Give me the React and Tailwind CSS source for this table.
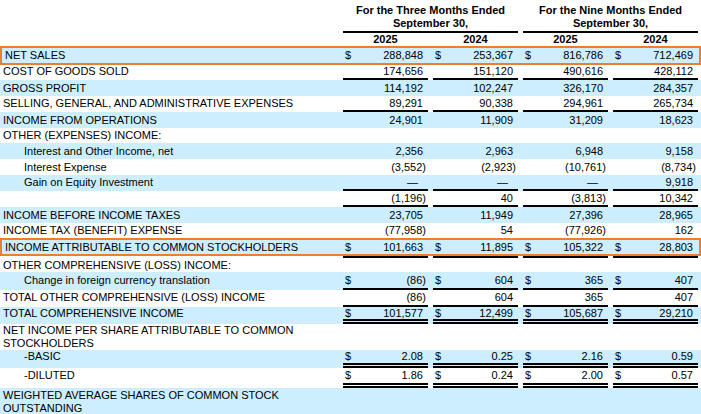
const BLUE = "bg-[#cceeff]";

const rows = [
  { label: "COST OF GOODS SOLD", vals: ["174,656", "151,120", "490,616", "428,112"], line: "single", h: "h-[15px]" },
  { label: "GROSS PROFIT", vals: ["114,192", "102,247", "326,170", "284,357"], bg: true, h: "h-[16px]" },
  { label: "SELLING, GENERAL, AND ADMINISTRATIVE EXPENSES", vals: ["89,291", "90,338", "294,961", "265,734"], line: "single", h: "h-[16px]" },
  { label: "INCOME FROM OPERATIONS", vals: ["24,901", "11,909", "31,209", "18,623"], bg: true, h: "h-[16px]" },
  { label: "OTHER (EXPENSES) INCOME:", h: "h-[15px]" },
  { label: "Interest and Other Income, net", indent: true, vals: ["2,356", "2,963", "6,948", "9,158"], bg: true, h: "h-[16px]" },
  { label: "Interest Expense", indent: true, vals: ["(3,552)", "(2,923)", "(10,761)", "(8,734)"], h: "h-[16px]" },
  { label: "Gain on Equity Investment", indent: true, vals: ["—", "—", "—", "9,918"], line: "single", bg: true, h: "h-[16px]" },
  { label: "", vals: ["(1,196)", "40", "(3,813)", "10,342"], line: "single", h: "h-[16px]" },
  { label: "INCOME BEFORE INCOME TAXES", vals: ["23,705", "11,949", "27,396", "28,965"], bg: true, h: "h-[16px]" },
  { label: "INCOME TAX (BENEFIT) EXPENSE", vals: ["(77,958)", "54", "(77,926)", "162"], h: "h-[15px]" },
];

const rows2 = [
  { label: "OTHER COMPREHENSIVE (LOSS) INCOME:", h: "h-[14px]" },
  { label: "Change in foreign currency translation", indent: true, vals: ["(86)", "604", "365", "407"], dollars: true, line: "single", bg: true, h: "h-[18px]" },
  { label: "TOTAL OTHER COMPREHENSIVE (LOSS) INCOME", vals: ["(86)", "604", "365", "407"], line: "single", h: "h-[17px]" },
  { label: "TOTAL COMPREHENSIVE INCOME", vals: ["101,577", "12,499", "105,687", "29,210"], dollars: true, line: "double", bg: true, h: "h-[17px]" },
  { label: "NET INCOME PER SHARE ATTRIBUTABLE TO COMMON STOCKHOLDERS", h: "h-[26px]" },
  { label: "-BASIC", indent: true, vals: ["2.08", "0.25", "2.16", "0.59"], dollars: true, line: "double", bg: true, h: "h-[18px]" },
  { label: "-DILUTED", indent: true, vals: ["1.86", "0.24", "2.00", "0.57"], dollars: true, line: "double", h: "h-[20px]" },
  { label: "WEIGHTED AVERAGE SHARES OF COMMON STOCK OUTSTANDING", bg: true, h: "h-[27px]" },
];

const lineCls = (line) =>
  line === "single"
    ? "border-b-2 border-black"
    : line === "double"
    ? "border-b-[5px] border-double border-black"
    : "";

const padCls = (line) =>
  line === "single"
    ? "border-b-2 border-transparent"
    : line === "double"
    ? "border-b-[5px] border-transparent"
    : "";

const numPad = (v) =>
  v.startsWith("(") ? "pr-[2px]" : v === "—" ? "pr-[10px]" : "pr-[5px]";

function Cell({ v, dollar, line, first }) {
  return (
    <div
      className={`flex h-full w-[85px] items-center justify-between ${first ? "" : "ml-[5px]"} ${v !== undefined ? lineCls(line) : ""}`}
    >
      <span className="pl-[2px]">{dollar ? "$" : ""}</span>
      <span className={v ? numPad(v) : ""}>{v}</span>
    </div>
  );
}

function Row({ r, labelW = "w-[343px]", boxed }) {
  return (
    <div className={`flex ${r.h} ${r.bg ? BLUE : ""} ${boxed ? "border-2 border-[#ed7d31]" : ""}`}>
      <div
        className={`flex h-full ${labelW} shrink-0 items-center leading-[13px] ${r.indent ? "pl-[24px]" : "pl-[3px]"} pr-[40px] ${r.vals ? padCls(r.line) : ""}`}
      >
        {r.label}
      </div>
      {r.vals &&
        r.vals.map((v, i) => (
          <Cell key={i} v={v} dollar={r.dollars} line={r.line} first={i === 0} />
        ))}
    </div>
  );
}

export default function App() {
  return (
    <div className="h-[414px] w-[701px] overflow-hidden bg-white font-['Liberation_Sans',Arial,sans-serif] text-[11px] text-black">
      <div className="flex pt-[4px]">
        <div className="w-[343px] shrink-0" />
        <div className="w-[175px] border-b-2 border-black pb-[1px] text-center font-bold leading-[13px]">
          For the Three Months Ended
          <br />
          September 30,
        </div>
        <div className="ml-[5px] w-[175px] border-b-2 border-black pb-[1px] text-center font-bold leading-[13px]">
          For the Nine Months Ended
          <br />
          September 30,
        </div>
      </div>
      <div className="flex h-[13px] items-center font-bold">
        <div className="w-[343px] shrink-0" />
        {["2025", "2024", "2025", "2024"].map((y, i) => (
          <div key={i} className={`w-[85px] text-center ${i ? "ml-[5px]" : ""}`}>
            {y}
          </div>
        ))}
      </div>
      <Row
        boxed
        labelW="w-[341px]"
        r={{ label: "NET SALES", vals: ["288,848", "253,367", "816,786", "712,469"], dollars: true, bg: true, h: "h-[19px]" }}
      />
      {rows.map((r, i) => (
        <Row key={i} r={r} />
      ))}
      <Row
        boxed
        labelW="w-[341px]"
        r={{ label: "INCOME ATTRIBUTABLE TO COMMON STOCKHOLDERS", vals: ["101,663", "11,895", "105,322", "28,803"], dollars: true, bg: true, h: "h-[18px]" }}
      />
      <div className="flex h-[2px]">
        <div className="w-[343px] shrink-0" />
        <div className="w-[85px] bg-black" />
        <div className="ml-[5px] w-[85px] bg-black" />
        <div className="ml-[5px] w-[85px] bg-black" />
        <div className="ml-[5px] w-[85px] bg-black" />
      </div>
      {rows2.map((r, i) => (
        <Row key={i} r={r} />
      ))}
    </div>
  );
}
